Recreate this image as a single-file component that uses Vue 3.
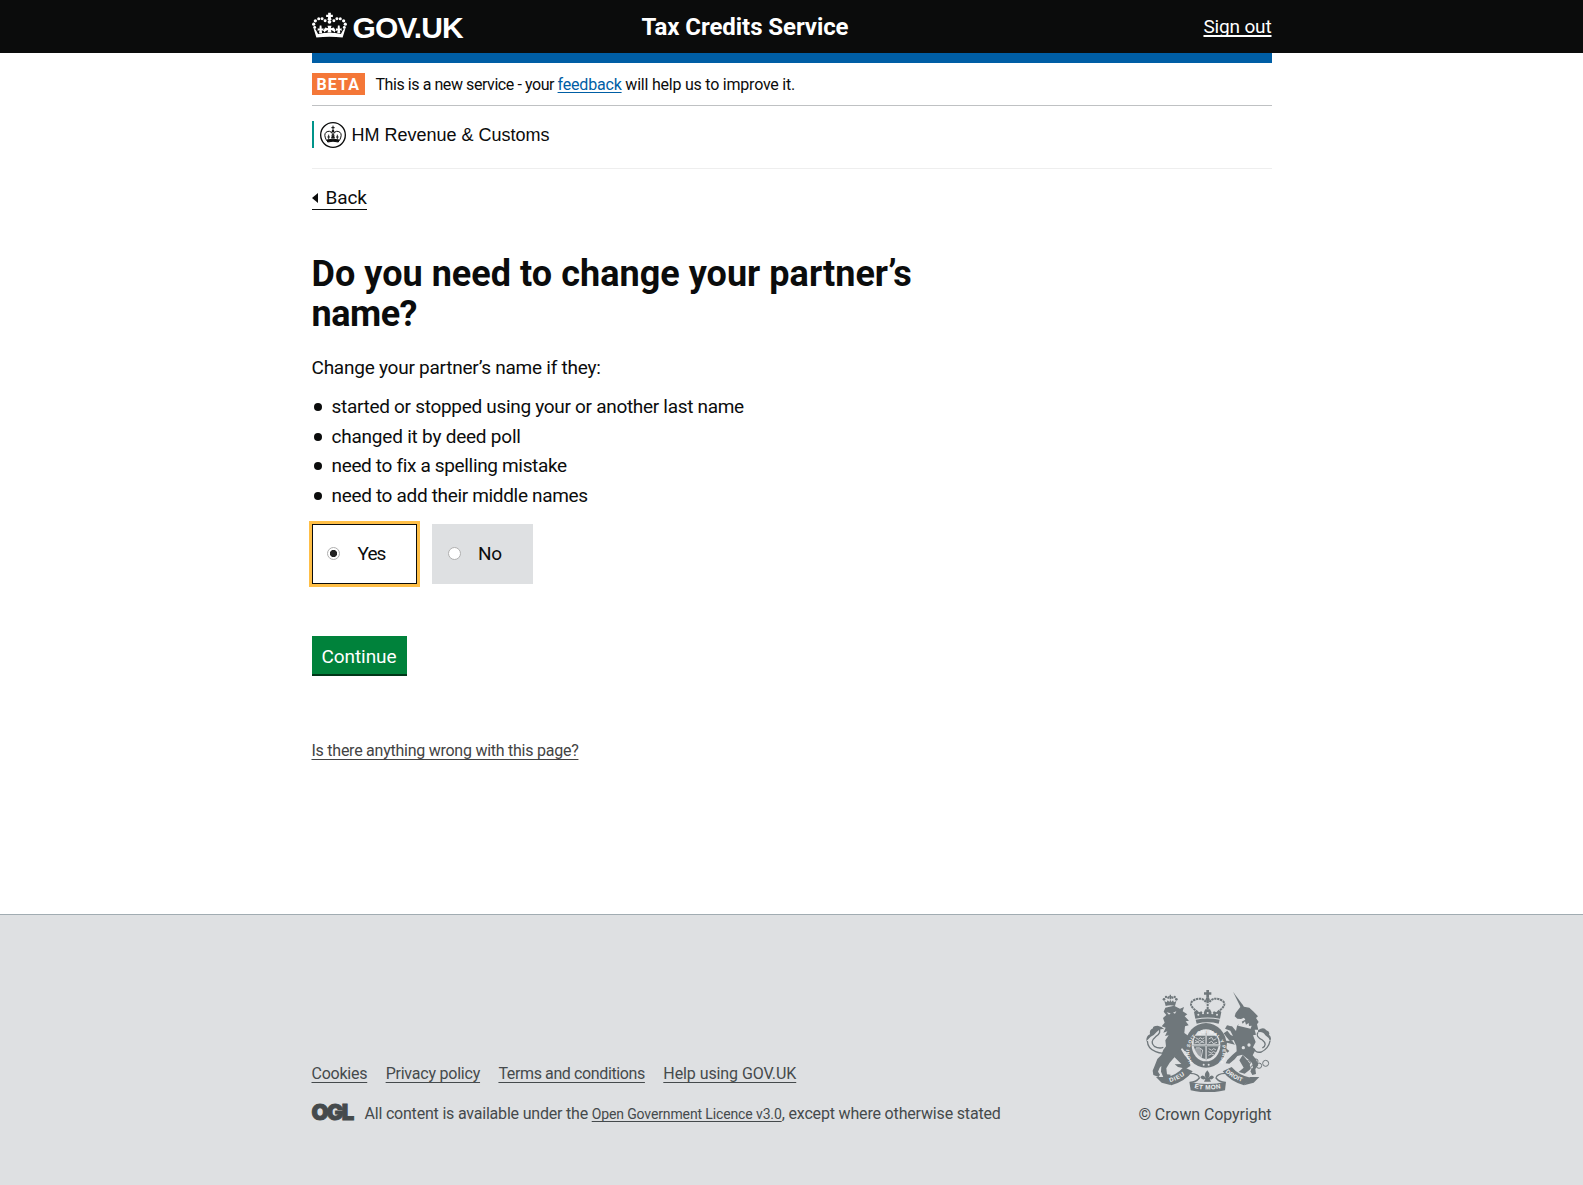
<script setup>
import { ref } from 'vue'

const answer = ref('yes')

const reasons = [
  { text: 'started or stopped using your or another last name', spacing: '-0.3px' },
  { text: 'changed it by deed poll', spacing: '-0.22px' },
  { text: 'need to fix a spelling mistake', spacing: '-0.34px' },
  { text: 'need to add their middle names', spacing: '-0.33px' },
]

const footerLinks = [
  { text: 'Cookies', spacing: '-0.24px' },
  { text: 'Privacy policy', spacing: '-0.22px' },
  { text: 'Terms and conditions', spacing: '-0.38px' },
  { text: 'Help using GOV.UK', spacing: '-0.08px' },
]
</script>

<template>
  <div class="page">
    <header class="masthead">
      <div class="wrap masthead-row">
        <a class="brand" href="#">
          <svg class="crown" viewBox="0 0 104 80" width="35" height="27">
            <g fill="#fff">
              <path d="M48 2h8v6h6v7h-6l2 9H46l2-9h-6V8h6z" />
              <circle cx="52" cy="29" r="5.5" />
              <circle cx="39" cy="26" r="4.4" /><circle cx="30" cy="20" r="4.4" /><circle cx="20" cy="20" r="4.6" />
              <circle cx="10" cy="26" r="4.8" /><circle cx="5" cy="36" r="4.8" /><circle cx="8" cy="46" r="4.4" />
              <circle cx="65" cy="26" r="4.4" /><circle cx="74" cy="20" r="4.4" /><circle cx="84" cy="20" r="4.6" />
              <circle cx="94" cy="26" r="4.8" /><circle cx="99" cy="36" r="4.8" /><circle cx="96" cy="46" r="4.4" />
              <path d="M5 50l6 2 7 13q34-7 68 0l7-13 6-2-8 26Q52 71 13 76z" />
              <path d="M21 63l1-10-5 3v-8l5 2 1-10h5l1 10 5-2v8l-5-2 1 9zM75 63l1-9-5 2v-8l5 2 1-10h5l1 10 5-2v8l-5-3 1 10zM46 61l2-8-7 3-4 5-3-6 5-9 9 2-2-7h12l-2 7 9-2 5 9-3 6-4-5-7-3 2 8z" />
            </g>
          </svg>
          <span>GOV.UK</span>
        </a>
        <span class="service">Tax Credits Service</span>
        <a class="signout" href="#">Sign out</a>
      </div>
    </header>

    <main class="wrap">
      <div class="bar"></div>
      <div class="phase">
        <strong class="tag">BETA</strong>
        <p><span class="p1">This is a new service - your </span><a href="#">feedback</a><span class="p2"> will help us to improve it.</span></p>
      </div>
      <div class="org">
        <div class="org-logo">
          <svg viewBox="0 0 78 78" width="26" height="26">
            <circle cx="39" cy="39" r="37" fill="none" stroke="#0b0c0c" stroke-width="4" />
            <g fill="none" stroke="#0b0c0c" stroke-width="3">
              <path d="M20 56Q10 38 18 31Q30 23 37 35V46M58 56Q68 38 60 31Q48 23 41 35V46" />
              <path d="M39 11v18M34 17h10" />
              <path d="M26 38v14M52 38v14M22 45h8M48 45h8M33 46h12M35 41l8 10M43 41l-8 10" stroke-width="2.6" />
              <path d="M21 54Q39 49 57 54L55 60Q39 55 23 60z" fill="#0b0c0c" />
            </g>
            <circle cx="39" cy="28" r="4" fill="#0b0c0c" />
          </svg>
          <span>HM Revenue &amp; Customs</span>
        </div>
      </div>

      <div class="back-row">
        <a class="back" href="#"><i></i><span>Back</span></a>
      </div>

      <h1>Do you need to change your partner’s <span>name?</span></h1>
      <p class="lede">Change your partner’s name if they:</p>
      <ul class="reasons">
        <li v-for="r in reasons" :key="r.text" :style="{ letterSpacing: r.spacing }">{{ r.text }}</li>
      </ul>

      <div class="choices">
        <label class="choice yes" :class="{ selected: answer === 'yes' }">
          <input v-model="answer" type="radio" name="change" value="yes" /><span>Yes</span>
        </label>
        <label class="choice no" :class="{ selected: answer === 'no' }">
          <input v-model="answer" type="radio" name="change" value="no" /><span>No</span>
        </label>
      </div>
      <button class="continue" type="button">Continue</button>
      <div class="help-row"><a class="help" href="#">Is there anything wrong with this page?</a></div>
    </main>

    <footer class="footer">
      <div class="wrap footer-row">
        <div>
          <nav class="links">
            <a v-for="l in footerLinks" :key="l.text" href="#" :style="{ letterSpacing: l.spacing }">{{ l.text }}</a>
          </nav>
          <div class="licence">
            <span class="ogl">OGL</span>
            <p><span class="l1">All content is available under the </span><a href="#">Open Government Licence v3.0</a><span class="l2">, except where otherwise stated</span></p>
          </div>
        </div>
        <div class="crest">
          <svg viewBox="20 15 375 306" width="125" height="102">
            <defs>
              <path id="garter" d="M160 232A50 55 0 1 1 240 232" />
              <path id="dieu" d="M92 292Q124 283 146 262" />
              <path id="mon" d="M165 309Q204 319 250 308" />
              <path id="droit" d="M258 261Q281 284 320 294" />
            </defs>
            <g fill="#6f777b">
              <!-- central crown -->
              <path d="M201 15h8v7h7v7h-7v9h-8v-9h-7v-7h7z" />
              <circle cx="205" cy="43" r="6" />
              <path d="M168 101l-4-20 8-7 7 8 7-3 6 6 6-12h14l6 12 6-6 7 3 7-8 8 7-4 20Q205 94 168 101z" />
              <path d="M169 104Q205 97 241 104L238 116Q205 108 172 116z" />
              <!-- lion's crown -->
              <circle cx="74" cy="43" r="4" /><circle cx="80" cy="36" r="3.500" /><circle cx="87" cy="38" r="3.500" />
              <circle cx="99" cy="38" r="3.500" /><circle cx="106" cy="36" r="3.500" /><circle cx="111" cy="43" r="4" />
              <path d="M91 29h4v5h4v3h-4v6h-4v-6h-4v-3h4z" />
              <path d="M75 48l7 4 3-6 5 5 3-7 3 7 5-5 3 6 7-4-4 15Q93 58 79 63z" />
              <!-- lion -->
              <path d="M78 68L104 62L122 71L134 66L130 79L144 88L136 94L149 107L139 109L148 121L137 124L135 144L151 155L162 170L154 175L169 190L163 207L172 218L161 223L149 203L136 198L128 189L119 202L104 218L91 233L81 250L83 268L94 269L92 280L73 279L65 260L66 242L61 248L56 260L62 269L58 276L42 270L40 257L47 240L54 222L66 210L72 194L80 184L78 166L88 151L77 153L84 139L72 143L79 128L67 124L76 113L71 99L81 90L73 80z" />
              <path d="M123 190L135 210L152 229L153 243L140 251L116 246L106 238L126 237L105 216z" />
              <path d="M21 169Q20 153 32 148Q29 135 41 130Q39 122 55 122Q68 124 75 133Q61 130 52 141Q44 152 34 155z" />
              <!-- unicorn -->
              <path d="M281 20L312 62L304 67z" />
              <path d="M289 84L303 66L307 57L314 65L330 68L343 80L356 94L350 99L358 111L353 118L357 134L346 134L350 149L341 151L349 171L341 187L348 196L340 211L350 223L357 240L348 252L350 267L339 270L333 259L341 247L338 234L326 223L309 209L294 213L286 223L270 236L259 235L264 225L279 210L292 199L291 182L283 165L272 169L262 157L253 145L264 137L274 150L281 153L273 137L257 131L263 121L278 124L290 138L293 123L304 112L318 104L314 98L305 102L294 101L286 94z" />
              <path d="M287 179L263 173L258 188L270 198L264 203L252 188L255 167L279 168z" />
              <path d="M356 136Q373 124 381 136Q393 140 389 149Q399 158 392 169Q388 156 378 151Q370 138 356 142z" />
              <path d="M310 210L331 235L333 253L316 266L298 261L313 248L300 226z" />
              <!-- garter and ribbon -->
              <ellipse cx="200" cy="181" rx="62" ry="67" />
              <path d="M76 278Q111 272 133 246L160 259Q138 289 96 301z" />
              <path d="M334 278Q299 272 277 246L250 259Q272 289 314 301z" />
              <path d="M150 290Q204 304 260 290L257 316Q204 328 154 316z" />
              <path d="M50 276L78 276L96 301L67 293z M360 276L332 276L314 301L343 293z" />
            </g>
            <g fill="none" stroke="#6f777b">
              <path d="M168 76Q146 58 161 47Q188 32 202 54M242 76Q264 58 249 47Q222 32 208 54M205 47v32" stroke-width="6" stroke-dasharray="7 2" />
              <path d="M24 168Q25 191 49 200Q66 207 76 203M392 168Q388 190 366 201Q350 205 344 191M58 128Q68 144 49 155Q30 171 45 184Q59 192 72 187M356 142Q347 154 369 165Q386 178 369 189" stroke-width="4" />
              <path d="M152 265Q178 266 180 279Q170 292 152 292M258 265Q232 266 230 279Q240 292 258 292" stroke-width="4" />
              <g stroke-width="3">
                <circle cx="327" cy="233" r="6" /><circle cx="340" cy="248" r="6" /><circle cx="359" cy="242" r="8" /><circle cx="379" cy="235" r="9" /><circle cx="350" cy="228" r="6" />
              </g>
            </g>
            <g fill="#dee0e2">
              <ellipse cx="200" cy="181" rx="43" ry="48" />
              <path d="M82 82l12 3-5 4zM101 83l10-4-4 7z" />
              <circle cx="177" cy="89" r="3" /><circle cx="191" cy="85" r="3" /><circle cx="205" cy="84" r="3" /><circle cx="219" cy="85" r="3" /><circle cx="233" cy="89" r="3" />
              <circle cx="312" cy="188" r="5" /><circle cx="329" cy="180" r="5" /><circle cx="275" cy="118" r="6" />
              <circle cx="193" cy="239" r="3" /><circle cx="208" cy="239" r="3" />
              <path d="M300 112l6-5 4 9 7-7 3 10 8-5 1 9 8-1-3 9-38-9z" />
            </g>
            <g fill="#6f777b">
              <path d="M167 152h31v26h-35q0-16 4-26zM203 152h30q5 12 5 26h-35zM163 184h35v38q-25-3-35-38zM203 184h35q-9 34-35 38z" />
              <path d="M204 256Q216 270 206 280Q218 264 224 277Q219 286 211 282L215 290H194L198 282Q187 286 183 277Q190 265 201 280Q191 270 204 256z" />
            </g>
            <path
              fill="none" stroke="#dee0e2" stroke-width="2.500"
              d="M169 158l8 5 6-5 6 4 6-4M167 166l8 4 7-4 6 4 7-4M166 174l8-3 7 4 7-4 7 3M208 162l9-5 5 9 9-5M208 174l9-5 5 7 11-4M170 190v17M176 190v23M182 190v27M170 189q10-4 20 6l-5 24M208 191l9 5 6-5 7 4M207 200l9 4 6-4 7 3M207 211l9-4 9 3"
            />
            <path d="M200.500 137v89M159 181h82" stroke="#6f777b" stroke-width="1.500" />
            <g class="motto" fill="#f0f1f2">
              <text font-size="14"><textPath href="#garter" textLength="236">HONI SOIT QUI MAL Y PENSE</textPath></text>
              <text font-size="18"><textPath href="#dieu" textLength="50">DIEU</textPath></text>
              <text font-size="19"><textPath href="#mon" textLength="80">ET MON</textPath></text>
              <text font-size="18"><textPath href="#droit" textLength="58">DROIT</textPath></text>
            </g>
          </svg>
          <a href="#">© Crown Copyright</a>
        </div>
      </div>
    </footer>
  </div>
</template>

<style>
body {
  margin: 0;
  background: #fff;
}
</style>

<style scoped>
.page {
  display: flex;
  flex-direction: column;
  height: 1185px;
  overflow: hidden;
  font-family: Roboto, sans-serif;
  font-size: 19px;
  color: #0b0c0c;
}
.wrap {
  width: 960px;
  margin: 0 auto;
}
p, h1, ul {
  margin: 0;
  padding: 0;
}
a {
  color: inherit;
  text-decoration-thickness: 1px;
  text-decoration-skip-ink: none;
  text-underline-offset: 3px;
}
.masthead {
  height: 53px;
  flex: none;
  background: #0b0c0c;
  color: #fff;
}
.masthead-row {
  display: flex;
}
.brand {
  display: flex;
  width: 330px;
  text-decoration: none;
  font: bold 30px/53px "Liberation Sans", Arial, sans-serif;
  letter-spacing: -0.9px;
}
.brand .crown {
  margin: 12px 6px 0 0;
}
.brand span {
  padding-top: 1px;
}
.service {
  flex: 1;
  font-size: 24px;
  font-weight: bold;
  line-height: 55px;
  letter-spacing: -0.07px;
}
.signout {
  line-height: 53px;
  letter-spacing: -0.16px;
  text-underline-offset: 2px;
  text-decoration-thickness: 2px;
}
.bar {
  height: 10px;
  background: #005ea5;
}
.phase {
  display: flex;
  height: 42px;
  border-bottom: 1px solid #bfc1c3;
  font-size: 16px;
}
.phase p {
  line-height: 43px;
  white-space: pre;
}
.phase a {
  color: #005ea5;
  letter-spacing: -0.19px;
  text-underline-offset: 2px;
}
.p1 {
  letter-spacing: -0.43px;
}
.p2 {
  letter-spacing: -0.22px;
}
.tag {
  box-sizing: border-box;
  width: 53px;
  height: 22px;
  margin: 10px 11px 0 0;
  padding-left: 5px;
  background: #f47738;
  color: #fff;
  font: bold 16px/23px Roboto, sans-serif;
  letter-spacing: 1.1px;
}
.org {
  height: 62px;
  border-bottom: 1px solid #eee;
}
.org-logo {
  display: flex;
  height: 27px;
  position: relative;
  top: 15px;
  border-left: 2px solid #00948a;
  font: 18px/29px "Liberation Sans", Arial, sans-serif;
}
.org-logo svg {
  margin: 1px 6px 0 6px;
}
.back-row {
  height: 85px;
}
.back {
  display: inline-flex;
  align-items: center;
  height: 22px;
  margin-top: 18px;
  border-bottom: 1px solid #0b0c0c;
  line-height: 22px;
  letter-spacing: -0.1px;
  text-decoration: none;
}
.back i {
  border: solid transparent;
  border-width: 5px 6px 5px 0;
  border-right-color: #0b0c0c;
  margin: 0 8px 1px 0;
}
h1 {
  width: 640px;
  font-size: 36px;
  line-height: 40px;
  font-weight: bold;
  letter-spacing: 0.03px;
}
h1 span {
  letter-spacing: -0.5px;
}
.lede {
  margin-top: 19px;
  line-height: 30px;
  letter-spacing: -0.24px;
}
.reasons {
  margin-top: 9px;
  list-style: none;
}
.reasons li {
  display: flex;
  align-items: center;
  height: 29.7px;
  line-height: 30px;
}
.reasons li::before {
  content: "";
  width: 8px;
  height: 8px;
  margin: 0 9.5px 0 2.5px;
  border-radius: 50%;
  background: #0b0c0c;
}
.choices {
  display: flex;
  gap: 15px;
  margin-top: 13px;
}
.choice {
  box-sizing: border-box;
  display: flex;
  align-items: center;
  height: 60px;
  padding-left: 15px;
  border: 1px solid #dee0e2;
  background: #dee0e2;
}
.choice.yes {
  width: 105px;
  padding-left: 14px;
}
.choice.yes span {
  padding-left: 1px;
  letter-spacing: -0.9px;
}
.choice.no {
  width: 101px;
}
.choice.no span {
  padding-left: 0.5px;
  letter-spacing: -0.4px;
}
.choice.selected {
  border-color: #0b0c0c;
  background: #fff;
  outline: 3px solid #ffbf47;
}
.choice input {
  appearance: none;
  box-sizing: border-box;
  width: 13px;
  height: 13px;
  margin: 0 17px 0 0;
  border: 1px solid #b0b0b0;
  border-radius: 50%;
  background: #fff;
}
.choice input:checked {
  background: radial-gradient(circle, #222 3.2px, #fff 4px);
}
.continue {
  display: block;
  width: 95px;
  height: 38px;
  margin-top: 52px;
  padding: 0;
  border: 0;
  background: #00823b;
  box-shadow: 0 2px 0 #003618;
  color: #fff;
  font: 19px/41px Roboto, sans-serif;
  letter-spacing: -0.06px;
}
.help-row {
  margin-top: 67px;
  font-size: 16px;
  line-height: 20px;
}
.help {
  color: #434343;
  letter-spacing: -0.25px;
}
.footer {
  flex: none;
  height: 270px;
  margin-top: auto;
  border-top: 1px solid #a1acb2;
  background: #dee0e2;
  color: #454a4c;
  font-size: 16px;
}
.footer-row {
  display: flex;
  justify-content: space-between;
}
.links {
  display: flex;
  gap: 18.4px;
  margin-top: 149px;
  line-height: 20px;
}
.licence {
  display: flex;
  margin-top: 20px;
  line-height: 20px;
}
.licence p {
  white-space: pre;
}
.licence a {
  font-size: 14px;
  letter-spacing: -0.125px;
  text-underline-offset: 2px;
}
.l1 {
  letter-spacing: -0.2px;
}
.l2 {
  letter-spacing: -0.17px;
}
.ogl {
  width: 53px;
  font: 900 22px/17px Inter, sans-serif;
  letter-spacing: -1.7px;
  -webkit-text-stroke: 1px #454a4c;
}
.crest {
  display: flex;
  flex-direction: column;
  align-items: flex-end;
  padding-top: 75px;
}
.crest svg {
  margin-right: 0.500px;
}
.crest a {
  margin-top: 13px;
  line-height: 20px;
  letter-spacing: -0.09px;
  text-decoration: none;
}
.motto {
  font-family: "Liberation Sans", Arial, sans-serif;
  font-weight: bold;
}
</style>
